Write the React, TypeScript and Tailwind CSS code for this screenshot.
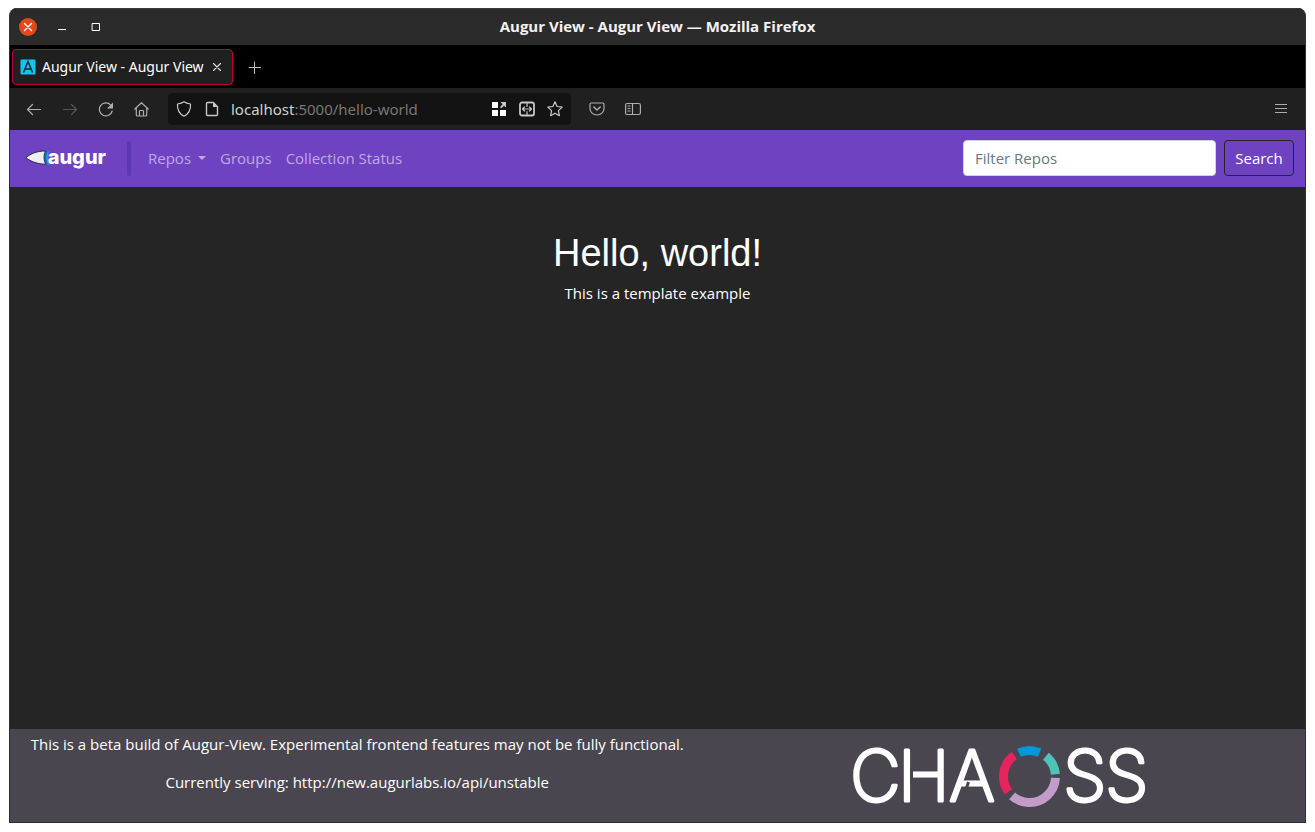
import type { ReactNode } from 'react';

type IconProps = { children: ReactNode; className?: string };

function Icon({ children, className = '' }: IconProps) {
  return (
    <svg
      viewBox="0 0 16 16"
      className={`size-4 shrink-0 ${className}`}
      fill="none"
      stroke="currentColor"
      strokeWidth="1.2"
      strokeLinecap="round"
      strokeLinejoin="round"
      aria-hidden="true"
    >
      {children}
    </svg>
  );
}

type ToolButtonProps = { label: string; narrow?: boolean; className?: string; children: ReactNode };

function ToolButton({ label, narrow = false, className = '', children }: ToolButtonProps) {
  return (
    <button
      type="button"
      aria-label={label}
      className={`flex h-8 shrink-0 items-center justify-center ${narrow ? 'w-7' : 'w-9'} ${className}`}
    >
      <Icon>{children}</Icon>
    </button>
  );
}

function TitleBar() {
  return (
    <header className="relative flex h-[37px] items-center justify-center border-t border-[#3c3c3c] bg-[#2b2b2b]">
      <div className="absolute left-[9px] flex items-center gap-4">
        <button
          type="button"
          aria-label="Close"
          className="flex size-[18px] items-center justify-center rounded-full bg-[#e04a16] text-white"
        >
          <Icon>
            <path d="M4.5 4.5l7 7M11.5 4.5l-7 7" strokeWidth="1.4" />
          </Icon>
        </button>
        <button type="button" aria-label="Minimize" className="flex size-[18px] items-center justify-center text-white">
          <Icon>
            <path d="M4 10.5h8" strokeWidth="1" strokeLinecap="butt" />
          </Icon>
        </button>
        <button type="button" aria-label="Maximize" className="flex size-[18px] items-center justify-center text-white">
          <Icon>
            <path d="M4.5 4.5h7v7h-7z" strokeWidth="1" strokeLinejoin="miter" />
          </Icon>
        </button>
      </div>
      <h1 className="pb-0.5 text-[15px] leading-5 font-bold text-[#f2f2f2]">Augur View - Augur View — Mozilla Firefox</h1>
    </header>
  );
}

function TabBar() {
  return (
    <div className="flex h-[43px] items-center bg-black pl-0.5">
      <div className="flex h-9 w-[221px] items-center rounded border border-[#c4002f] bg-[#202020] pl-[7px]">
        <svg viewBox="0 0 16 16" className="size-4 shrink-0" aria-hidden="true">
          <rect x="0.5" y="0.5" width="15" height="15" rx="1" fill="#12c4ee" />
          <path d="M3.5 13.5L8 2.5l4.5 11M5 10h6" fill="none" stroke="#10272d" strokeWidth="1.5" />
        </svg>
        <span className="ml-1.5 w-[165px] font-['Noto_Sans',sans-serif] text-sm whitespace-nowrap text-white">
          Augur View - Augur View
        </span>
        <button type="button" aria-label="Close tab" className="ml-0.5 text-[#e0e0e0]">
          <Icon>
            <path d="M4.5 4.5l7 7M11.5 4.5l-7 7" strokeWidth="1.1" />
          </Icon>
        </button>
      </div>
      <button type="button" aria-label="New tab" className="ml-3.5 text-[#c0c0c0]">
        <Icon>
          <path d="M7.5 3v11.500M2 8.500h11.500" strokeWidth="1" />
        </Icon>
      </button>
    </div>
  );
}

function Toolbar() {
  return (
    <div className="flex h-[42px] items-center bg-[#202020] pr-1.5 pl-1.5 text-[#adadad]">
      <ToolButton label="Back">
        <path d="M14.5 8.500h-13M6.500 3.500l-5 5 5 5" />
      </ToolButton>
      <ToolButton label="Forward" className="text-[#565656]">
        <path d="M1.500 8.500h13M9.500 3.500l5 5-5 5" />
      </ToolButton>
      <ToolButton label="Reload">
        <path d="M14.200 10A6.500 6.500 0 1 1 12.800 4.100" />
        <path d="M15 1.500v6H9z" fill="currentColor" stroke="none" />
      </ToolButton>
      <ToolButton label="Home">
        <path d="M.800 8L7.500 1.700 14.200 8M2.300 7v7c0 .6.400 1 1 1h8.400c.6 0 1-.4 1-1V7M5.500 14.800v-4.500c0-.4.300-.8.800-.8h2.400c.5 0 .8.400.8.800v4.500" />
      </ToolButton>
      <div className="ml-2 flex h-8 w-[403px] items-center rounded bg-[#131313] px-0.5 text-[#c8c8c8]">
        <ToolButton label="Tracking protection" narrow>
          <path d="M8 .8c2 1.400 4 1.900 6.500 2.200.4 5.500-1.200 9.500-6.500 12.200C2.700 12.500 1.100 8.500 1.500 3 4 2.700 6 2.200 8 .8z" />
        </ToolButton>
        <ToolButton label="Site information" narrow>
          <path d="M3.500 1.500h5.800l4.200 4.200v7.800c0 .6-.4 1-1 1h-9c-.6 0-1-.4-1-1v-11c0-.6.400-1 1-1z" strokeWidth="1.400" />
          <path d="M9 1l5 5H9z" fill="currentColor" stroke="none" />
        </ToolButton>
        <span className="ml-[5px] flex-1 font-['Noto_Sans',sans-serif] text-[15px] text-[#777777]">
          <span className="text-[#d2d2d2]">localhost</span>:5000/hello-world
        </span>
        <ToolButton label="Open extensions" narrow>
          <path
            d="M1 1h6v6H1zM1 9h6v6H1zM9 9h6v6H9z"
            fill="white"
            stroke="none"
          />
          <path d="M9.500 1H15v5.500L13 4.700 10.300 7.200 9 6l2.600-2.700z" fill="currentColor" stroke="none" />
        </ToolButton>
        <ToolButton label="Fit page width" narrow>
          <rect x="1" y="1.500" width="14" height="13" rx="2" strokeWidth="1.800" />
          <path d="M3.500 8h9M5.500 6l-2 2 2 2M10.500 6l2 2-2 2M8 2v3.500M8 10.500V14" />
        </ToolButton>
        <ToolButton label="Bookmark this page" narrow>
          <path d="M8 .8l2.100 4.700 5.100.6-3.800 3.500 1 5.100L8 12.200l-4.400 2.500 1-5.100L.8 6.100l5.100-.6z" />
        </ToolButton>
      </div>
      <div className="w-2" />
      <ToolButton label="Save to Pocket">
        <path d="M2.200 2h11.600c.7 0 1.200.5 1.200 1.200v4.300a7 6.500 0 0 1-14 0V3.200C1 2.500 1.500 2 2.200 2z" />
        <path d="M4.800 6L8 9l3.200-3" strokeWidth="1.500" />
      </ToolButton>
      <ToolButton label="Sidebars">
        <rect x=".6" y="2.500" width="14.800" height="11" rx="1.500" />
        <path d="M7.500 2.500v11M3 5h2M3 7.500h2M3 10h2" />
      </ToolButton>
      <ToolButton label="Application menu" className="ml-auto">
        <path d="M2 3.500h12M2 7.500h12M2 11.500h12" strokeLinecap="butt" />
      </ToolButton>
    </div>
  );
}

function AugurLogo() {
  return (
    <a href="#home" className="relative flex h-9 w-[81px] shrink-0 items-center justify-end" aria-label="augur home">
      <svg viewBox="0 0 26 16" className="absolute left-0 h-4 w-[26px]" aria-hidden="true">
        <path d="M19 .8c2.800.2 5.300.6 5.300.6-1.800 4.500-1.800 8.800.3 13.200 0 0-3.600.2-6.600-.4z" fill="#0f71bd" />
        <path d="M22.500 1.200l1.800.2c-1.800 4.500-1.800 8.800.3 13.200l-1.900.1c-2-4.600-1.900-9-.2-13.500z" fill="#1f9be0" />
        <path d="M.8 7.800C6 3.200 12.500 1 20.500 1c-2 4.300-1.900 8.700.2 13.200C12.500 14.200 6 11.500.8 7.800z" fill="#eeeeee" stroke="#33264d" strokeWidth="1" />
      </svg>
      <span className="relative pb-0.5 font-[Inter,sans-serif] text-xl leading-5 font-extrabold text-white">augur</span>
    </a>
  );
}

function NavBar() {
  return (
    <nav className="flex h-[57px] items-center bg-[#6f42c1] pr-[11px] pb-px pl-[15px] text-[15px]">
      <AugurLogo />
      <div className="ml-[21px] h-[35px] w-1 rounded-sm bg-[#6035b1]" />
      <div className="ml-[17px] flex items-center gap-3.5 text-[#bfa9e3]">
        <button type="button" className="flex items-center gap-[7px]">
          Repos
          <svg viewBox="0 0 8 4" className="h-1 w-2" fill="currentColor" aria-hidden="true">
            <path d="M0 0h8L4 4z" />
          </svg>
        </button>
        <a href="#groups">Groups</a>
        <a href="#status">Collection Status</a>
      </div>
      <form className="ml-auto flex items-center gap-2" onSubmit={(event) => event.preventDefault()}>
        <input
          type="search"
          aria-label="Filter Repos"
          placeholder="Filter Repos"
          className="h-9 w-[253px] rounded border border-[#ced4da] bg-white px-[11px] text-[#212529] placeholder:text-[#6c757d]"
        />
        <button type="submit" className="h-9 w-[70px] rounded border border-[#252525] text-white">
          Search
        </button>
      </form>
    </nav>
  );
}

const ringSegments = [
  { color: '#0098d6', start: -114, sweep: 47 },
  { color: '#4ec3b8', start: -51, sweep: 46 },
  { color: '#c29dc9', start: 3, sweep: 129 },
  { color: '#e5235f', start: 144, sweep: 90 },
];

function ChaossLogo() {
  return (
    <svg viewBox="-6 -13 308 93" className="h-[93px] w-[308px]" role="img" aria-label="CHAOSS">
      <g
        fill="white"
        stroke="white"
        strokeWidth="3"
        strokeLinejoin="round"
        className="font-[Inter,sans-serif] font-extralight"
        fontSize="70"
      >
        <text x="-2" y="59">C</text>
        <text x="46" y="59">H</text>
        <text x="97" y="59">A</text>
        <text x="211" y="59">S</text>
        <text x="253" y="59">S</text>
      </g>
      <path d="M59.500 26v16M116.500 40l-3 9" fill="none" stroke="#4a4650" strokeWidth="3" />
      <g fill="none" strokeWidth="9">
        {ringSegments.map((segment) => (
          <circle
            key={segment.color}
            cx="177.500"
            cy="34.500"
            r="26"
            pathLength="360"
            stroke={segment.color}
            strokeDasharray={`${segment.sweep} ${360 - segment.sweep}`}
            transform={`rotate(${segment.start} 177.500 34.500)`}
          />
        ))}
      </g>
    </svg>
  );
}

function Footer() {
  return (
    <footer className="grid grid-cols-[695fr_601fr] bg-[#4a4650] text-center text-[15px] text-white">
      <div className="flex flex-col gap-4 pt-1">
        <p className="leading-[22px]">
          This is a beta build of Augur-View. Experimental frontend features may not be fully functional.
        </p>
        <p className="leading-[22px]">Currently serving: http://new.augurlabs.io/api/unstable</p>
      </div>
      <div className="flex items-start justify-center pr-[10px]">
        <ChaossLogo />
      </div>
    </footer>
  );
}

export default function App() {
  return (
    <div className="flex min-h-screen flex-col bg-white px-[9px] pt-2 pb-[9px] font-['Open_Sans','Noto_Sans',sans-serif]">
      <div className="flex flex-1 flex-col overflow-hidden rounded-t-lg border-x border-b border-[#303030] bg-[#252525]">
        <TitleBar />
        <TabBar />
        <Toolbar />
        <NavBar />
        <main className="flex-1 pt-[43px] text-center text-white">
          <h2 className="font-['Liberation_Sans',sans-serif] text-[38px] leading-[46px]">Hello, world!</h2>
          <p className="mt-1.5 text-[15px] leading-[22px]">This is a template example</p>
        </main>
        <Footer />
      </div>
    </div>
  );
}
